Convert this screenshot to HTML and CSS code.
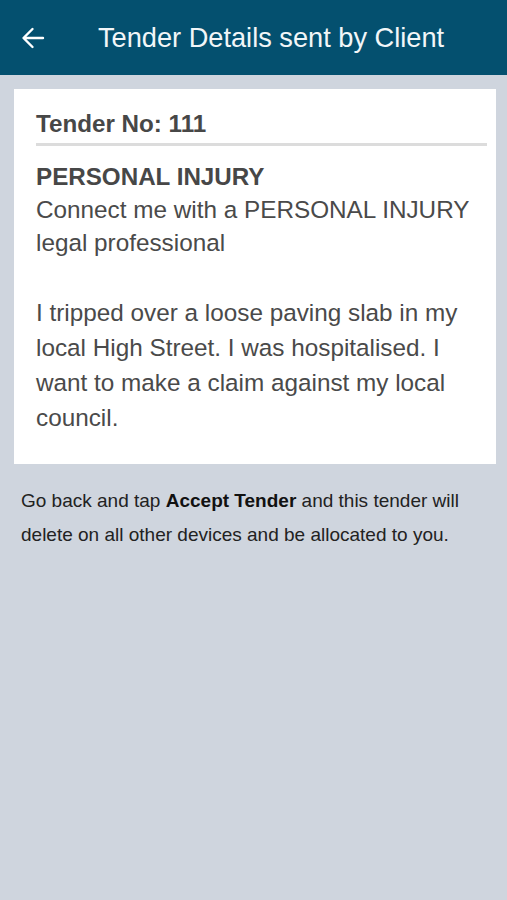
FILE: index.html
```html
<!DOCTYPE html>
<html>
<head>
<meta charset="utf-8">
<link rel="stylesheet" href="styles.css">
</head>
<body>
<header class="topbar">
  <span class="back">
    <svg width="24" height="24" viewBox="0 0 24 24"><path d="M22 12H3.5M11.5 3L2.5 12L11.5 21" fill="none" stroke="#fff" stroke-width="2.4" stroke-linecap="round" stroke-linejoin="round"/></svg>
  </span>
  <h1 class="title">Tender Details sent by Client</h1>
</header>
<main class="content">
  <section class="card">
    <div class="tender-no">Tender No: 111</div>
    <div class="divider"></div>
    <div class="category">PERSONAL INJURY</div>
    <p class="sub">Connect me with a PERSONAL INJURY legal professional</p>
    <p class="desc">I tripped over a loose paving slab in my local High Street. I was hospitalised. I want to make a claim against my local council.</p>
  </section>
  <p class="note">Go back and tap <b>Accept Tender</b> and this tender will delete on all other devices and be allocated to you.</p>
</main>
</body>
</html>
```
FILE: styles.css
```css
html, body {
  margin: 0;
  padding: 0;
  background: #cfd5de;
  font-family: "Liberation Sans", Arial, sans-serif;
  width: 507px;
  height: 900px;
  overflow: hidden;
}
.topbar {
  height: 75px;
  background: #04506f;
  display: flex;
  align-items: center;
  padding: 0 0 0 21px;
  box-sizing: border-box;
}
.back {
  width: 24px;
  height: 24px;
  display: flex;
}
.title {
  margin: 0 0 0 53px;
  font-size: 27.2px;
  font-weight: normal;
  color: #f2f6f8;
  white-space: nowrap;
}
.content {
  padding: 14px 11px 0 14px;
}
.card {
  background: #fff;
  padding: 20px 9px 22px 22px;
  height: 375px;
  box-sizing: border-box;
}
.tender-no {
  font-size: 24.2px;
  font-weight: bold;
  color: #474747;
  line-height: 30px;
}
.divider {
  height: 3px;
  background: #dcdcdc;
  margin: 4px 0 14px;
}
.category {
  font-size: 24.2px;
  font-weight: bold;
  color: #474747;
  line-height: 34px;
}
.sub,
.desc {
  padding-right: 12px;
}
.sub {
  margin: -1px 0 0;
  font-size: 24.3px;
  line-height: 33px;
  color: #4a4a4a;
}
.desc {
  margin: 36px 0 0;
  font-size: 24.3px;
  line-height: 35px;
  color: #4a4a4a;
}
.note {
  margin: 20px 0 0 7px;
  font-size: 19px;
  line-height: 34px;
  color: #222;
}
.note b {
  color: #111;
}
```
